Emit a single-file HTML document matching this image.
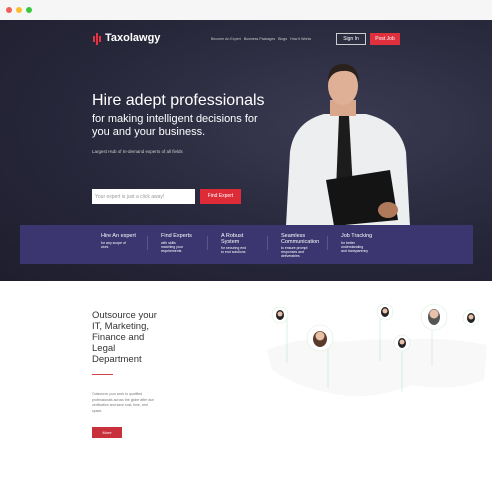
<!DOCTYPE html><html><head><style>
*{margin:0;padding:0;box-sizing:border-box}
body{width:492px;height:500px;background:#fff;font-family:"Liberation Sans",sans-serif;position:relative;overflow:hidden}
.a{position:absolute;white-space:nowrap}
.hero{left:0;top:20px;width:492px;height:261px;background:radial-gradient(ellipse at 70% 40%,#3a3a52 0%,#262639 60%,#1e1e2e 100%)}
.w{color:#fff}
</style></head><body>
<div class="a" style="left:0;top:0;width:492px;height:20px;background:#f6f6f6"></div>
<div class="a" style="left:6px;top:7px;width:6px;height:6px;border-radius:50%;background:#f25f58"></div>
<div class="a" style="left:16px;top:7px;width:6px;height:6px;border-radius:50%;background:#fbbe2e"></div>
<div class="a" style="left:26px;top:7px;width:6px;height:6px;border-radius:50%;background:#39c840"></div>
<div class="a hero"></div>
<div class="a" style="left:93px;top:36px;width:2px;height:6px;background:#e53341"></div>
<div class="a" style="left:96px;top:33px;width:2px;height:12px;background:#e53341"></div>
<div class="a" style="left:99px;top:36px;width:2px;height:6px;background:#e53341"></div>
<div class="a w" style="left:105px;top:32px;font-size:11px;font-weight:bold">Taxolawgy</div>
<div class="a" style="left:211px;top:37px;font-size:3.6px;color:#ccc">Become An Expert &nbsp;&nbsp;Business Packages &nbsp;&nbsp;Blogs &nbsp;&nbsp;How it Works</div>
<div class="a w" style="left:336px;top:33px;width:30px;height:12px;border:1px solid #ccc;font-size:5px;text-align:center;line-height:10px">Sign In</div>
<div class="a w" style="left:370px;top:33px;width:30px;height:12px;background:#e0303e;font-size:5px;text-align:center;line-height:12px">Post Job</div>
<svg class="a" style="left:280px;top:60px" width="135" height="166" viewBox="0 0 135 166">
<path d="M6 166 L10 92 Q14 62 44 54 L86 54 Q120 62 126 92 L130 166Z" fill="#eceef0"/>
<path d="M59 56 L69 56 L73 130 L64 140 L56 130Z" fill="#1c1c1c"/>
<rect x="50" y="40" width="26" height="16" fill="#d9a88c"/>
<ellipse cx="63" cy="26" rx="15" ry="19" fill="#dfb095"/>
<path d="M48 22 Q48 4 63 4 Q78 4 79 22 Q75 10 63 11 Q52 11 48 22Z" fill="#2a211c"/>
<path d="M46 120 L110 110 L118 160 L54 166Z" fill="#141414"/>
<ellipse cx="108" cy="150" rx="10" ry="8" fill="#b07a5a"/>
</svg>
<div class="a w" style="left:92px;top:92px;font-size:16px">Hire adept professionals</div>
<div class="a w" style="left:92px;top:113px;font-size:11px;line-height:13px">for making intelligent decisions for<br>you and your business.</div>
<div class="a" style="left:92px;top:149px;font-size:4.5px;color:#ccc">Largest Hub of In-demand experts of all fields</div>
<div class="a" style="left:92px;top:189px;width:103px;height:15px;background:#fff;font-size:5px;color:#999;padding:5px 3px">Your expert is just a click away!</div>
<div class="a w" style="left:200px;top:189px;width:41px;height:15px;background:#dd2b38;font-size:5px;text-align:center;line-height:15px">Find Expert</div>
<div class="a" style="left:20px;top:225px;width:453px;height:39px;background:#3b3570"></div>
<div class="a w" style="left:101px;top:233px;font-size:5.5px">Hire An expert<div style="font-size:3.5px;margin-top:2px">for any scope of<br>work</div></div>
<div class="a w" style="left:161px;top:233px;font-size:5.5px">Find Experts<div style="font-size:3.5px;margin-top:2px">with skills<br>matching your<br>requirements</div></div>
<div class="a w" style="left:221px;top:233px;font-size:5.5px">A Robust<br>System<div style="font-size:3.5px;margin-top:1px">for securing end<br>to end solutions</div></div>
<div class="a w" style="left:281px;top:233px;font-size:5.5px">Seamless<br>Communication<div style="font-size:3.5px;margin-top:1px">to ensure prompt<br>responses and<br>deliverables</div></div>
<div class="a w" style="left:341px;top:233px;font-size:5.5px">Job Tracking<div style="font-size:3.5px;margin-top:2px">for better<br>understanding<br>and transparency</div></div>
<div class="a" style="left:147px;top:236px;width:1px;height:14px;background:#5a5590"></div>
<div class="a" style="left:207px;top:236px;width:1px;height:14px;background:#5a5590"></div>
<div class="a" style="left:267px;top:236px;width:1px;height:14px;background:#5a5590"></div>
<div class="a" style="left:327px;top:236px;width:1px;height:14px;background:#5a5590"></div>
<div class="a" style="left:92px;top:310px;font-size:9.5px;line-height:11px;color:#333">Outsource your<br>IT, Marketing,<br>Finance and<br>Legal<br>Department</div>
<div class="a" style="left:92px;top:374px;width:21px;height:1px;background:#d0404c"></div>
<div class="a" style="left:92px;top:392px;font-size:3.5px;line-height:5.5px;color:#777">Outsource your work to qualified<br>professionals across the globe after due<br>verification and save cost, time, and<br>space.</div>
<div class="a w" style="left:92px;top:427px;width:30px;height:11px;background:#c8303c;font-size:4px;text-align:center;line-height:11px">More</div>
<svg class="a" style="left:262px;top:300px" width="230" height="110" viewBox="0 0 230 110">
<path d="M5 50 Q40 35 80 42 Q110 38 140 40 Q180 36 225 45 L222 80 Q190 92 150 85 Q110 100 80 95 Q40 90 10 70Z" fill="#f8f8f9"/>
<g stroke="#b5e2c2" stroke-width="0.5" fill="none"><path d="M25 15 V63"/><path d="M66 40 V88"/><path d="M118 15 V61"/><path d="M140 45 V92"/><path d="M170 20 V66"/></g>
<g fill="#fff" stroke="#d8eedf" stroke-width="0.6">
<circle cx="18" cy="15" r="8"/><circle cx="58" cy="38" r="13"/><circle cx="123" cy="12" r="8"/><circle cx="172" cy="17" r="13"/><circle cx="140" cy="43" r="8"/><circle cx="209" cy="18" r="8"/></g>
<g fill="#222"><ellipse cx="18" cy="15" rx="4" ry="5"/><ellipse cx="58" cy="39" rx="7" ry="8" fill="#5a3a2a"/><ellipse cx="123" cy="12" rx="4" ry="5"/><ellipse cx="172" cy="17" rx="6" ry="8" fill="#555"/><ellipse cx="140" cy="43" rx="4" ry="5"/><ellipse cx="209" cy="18" rx="4" ry="5"/></g>
<g fill="#e8c0a8"><circle cx="18" cy="14" r="2.5"/><circle cx="58" cy="36" r="4.5"/><circle cx="123" cy="11" r="2.5"/><circle cx="172" cy="14" r="4.5"/><circle cx="140" cy="42" r="2.5"/><circle cx="209" cy="17" r="2.5"/></g>
</svg>
</body></html>
